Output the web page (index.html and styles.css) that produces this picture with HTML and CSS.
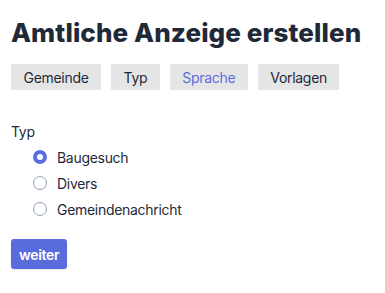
FILE: index.html
```html
<!DOCTYPE html>
<html>
    <head>
        <title>Amtliche Anzeige erstellen</title>
        <link rel="stylesheet" href="styles.css">
    </head>
    <body>
        <div id="page">
            <h1>Amtliche Anzeige erstellen</h1>
            <div class="tabs">
                <button class="tab">Gemeinde</button>
                <button class="tab">Typ</button>
                <button class="tab active">Sprache</button>
                <button class="tab">Vorlagen</button>
            </div>
            <form class="form">
                <div class="label">Typ</div>
                <div class="options">
                    <label class="option"><input type="radio" name="typ" checked><span>Baugesuch</span></label>
                    <label class="option"><input type="radio" name="typ"><span>Divers</span></label>
                    <label class="option"><input type="radio" name="typ"><span>Gemeindenachricht</span></label>
                </div>
                <button type="button" class="submit">weiter</button>
            </form>
        </div>
    </body>
</html>
```

FILE: styles.css
```css
body {
    font-family: Inter, "Noto Sans", sans-serif;
    margin: 0;
    background: #fff;
    color: #1e293b;
    letter-spacing: -0.3px;
}
#page {
    padding: 18px 11px;
}
h1 {
    margin: 0;
    font-size: 26px;
    font-weight: 800;
    line-height: 29px;
    letter-spacing: 0.1px;
    color: #1f2937;
}
.tabs {
    display: flex;
    gap: 10px;
    margin-top: 17px;
}
.tab {
    font-family: inherit;
    font-size: 14px;
    letter-spacing: -0.3px;
    height: 26px;
    padding: 0 12.5px;
    border: none;
    border-radius: 0;
    background: #e5e5e5;
    color: #1f2937;
}
.tab.active {
    color: #5b6ee1;
}
.form {
    margin-top: 32px;
}
.label {
    font-size: 14px;
    line-height: 20px;
}
.options {
    display: flex;
    flex-direction: column;
    padding-left: 22px;
    margin-top: 2px;
}
.option {
    display: flex;
    align-items: center;
    height: 26px;
    font-size: 14px;
}
.option input {
    appearance: none;
    width: 14px;
    height: 14px;
    margin: 0 10px 0 0;
    border: 1px solid #94a3b8;
    border-radius: 50%;
    background: #fff;
}
.option input:checked {
    border: 4px solid #5b6ee1;
}
.submit {
    margin-top: 17px;
    font-family: inherit;
    font-size: 14px;
    font-weight: 600;
    letter-spacing: -0.3px;
    height: 30px;
    padding: 0 8px;
    border: none;
    border-radius: 3px;
    background: #5a6bdb;
    color: #fff;
    box-shadow: 0 1px 2px rgba(0, 0, 0, 0.1);
}
```
